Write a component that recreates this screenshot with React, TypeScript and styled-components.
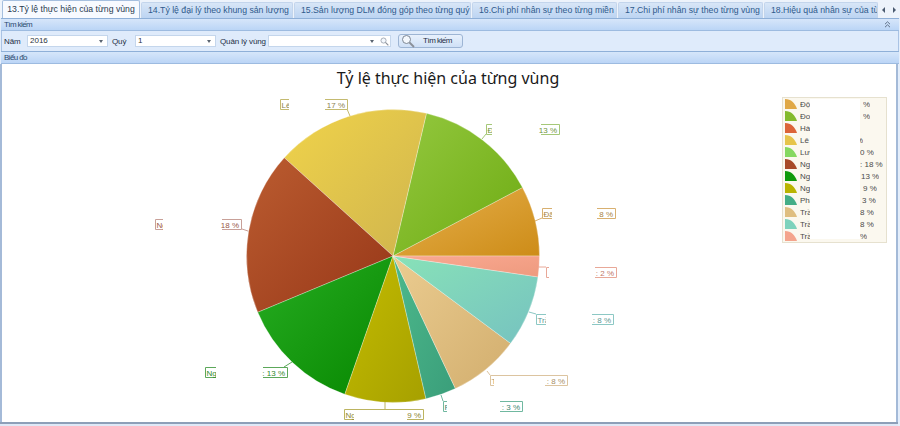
import styled, { createGlobalStyle } from 'styled-components';

const GlobalStyle = createGlobalStyle`
  html, body {
    margin: 0;
    padding: 0;
    background: #e4eefb;
  }
  #root {
    width: 900px;
    height: 426px;
    overflow: hidden;
  }
`;

const FONT = '"Liberation Sans", "Noto Sans", sans-serif';
const CX = 393;
const CY = 256;
const R = 146.5;

const tabs = [
  { title: '14.Tỷ lệ đại lý theo khung sản lượng', width: 152 },
  { title: '15.Sản lượng DLM đóng góp theo từng quý', width: 177 },
  { title: '16.Chi phí nhân sự theo từng miền', width: 145 },
  { title: '17.Chi phí nhân sự theo từng vùng', width: 145 },
  { title: '18.Hiệu quả nhân sự của từng vùng', width: 114 },
];

// from / to are degrees counter clockwise from 3 o'clock
const slices = [
  { from: 0, to: 27.9, light: '#e6b04c', dark: '#cd8c18' },
  { from: 27.9, to: 76.8, light: '#94c83f', dark: '#6dab12' },
  { from: 76.8, to: 137.9, light: '#f0d34a', dark: '#cfb44e' },
  { from: 137.9, to: 202.6, light: '#bb5c30', dark: '#973718' },
  { from: 202.6, to: 250.8, light: '#27ad22', dark: '#078700' },
  { from: 250.8, to: 283, light: '#c4bc00', dark: '#a6a000' },
  { from: 283, to: 295.2, light: '#4db98c', dark: '#3a9e7a' },
  { from: 295.2, to: 323.4, light: '#ebcc90', dark: '#d2ae6e' },
  { from: 323.4, to: 351.8, light: '#88e2b8', dark: '#76c2c0' },
  { from: 351.8, to: 360, light: '#faa992', dark: '#ee9a7e' },
];

const callouts = [
  { color: '#c4ba70', text: '#8c8450', name: 'Lê', value: '17 %', y: 99, lx: 280, lw: 9, rx: 325, rw: 23, line: '347,109 350,116' },
  { color: '#a5c878', text: '#6f9540', name: 'Đ', value: '13 %', y: 124, lx: 486, lw: 6, rx: 541, rw: 19, line: '486,134 482,139' },
  { color: '#d8b070', text: '#a88440', name: 'Đã', value: '8 %', y: 208, lx: 542, lw: 10, rx: 597, rw: 19, line: '542,218 535,221' },
  { color: '#e8a898', text: '#c07868', name: '', value: ': 2 %', y: 267, lx: 546, lw: 3, rx: 595, rw: 22, line: '539,267 546,267' },
  { color: '#8cc8c4', text: '#5c9894', name: 'Trầ', value: ': 8 %', y: 314, lx: 536, lw: 10, rx: 592, rw: 22, line: '529,312 536,314' },
  { color: '#dcc4a0', text: '#a89068', name: 'T', value: ': 8 %', y: 375, lx: 490, lw: 4, rx: 545, rw: 23, line: '487,371 490,375', joined: true },
  { color: '#70b8a0', text: '#408870', name: 'P', value: ': 3 %', y: 401, lx: 443, lw: 4, rx: 500, rw: 23, line: '441,395 443,401' },
  { color: '#bcb460', text: '#8c8630', name: 'Ng', value: '9 %', y: 409, lx: 344, lw: 10, rx: 407, rw: 17, line: '385,402 385,409', joined: true },
  { color: '#5ca85a', text: '#2f8a2c', name: 'Ng', value: ': 13 %', y: 367, lx: 205, lw: 11, rx: 263, rw: 25, line: '284,367 292,362' },
  { color: '#c8a098', text: '#985848', name: 'Ng', value: '18 %', y: 219, lx: 155, lw: 8, rx: 222, rw: 20, line: '242,229 248,231' },
];

const legend = [
  { color: '#e0a846', name: 'Đội', value: '%', indent: 3 },
  { color: '#84ba2c', name: 'Đoà', value: '%', indent: 3 },
  { color: '#dc6438', name: 'Hà', value: '', indent: 0 },
  { color: '#e6c44a', name: 'Lê T', value: '%', indent: 0, cut: true },
  { color: '#86d860', name: 'Lươ', value: '0 %', indent: 0 },
  { color: '#a84a28', name: 'Ngu', value: ': 18 %', indent: 0 },
  { color: '#109a0a', name: 'Ngu', value: '13 %', indent: 1 },
  { color: '#bab400', name: 'Ngu', value: '9 %', indent: 3 },
  { color: '#44ad86', name: 'Phá', value: '3 %', indent: 2 },
  { color: '#dfbe80', name: 'Trầ', value: '8 %', indent: 0 },
  { color: '#7ed2bc', name: 'Trầ', value: '8 %', indent: 0 },
  { color: '#f4a48c', name: 'Trầ', value: '%', indent: 0 },
];

const point = (deg: number) => {
  const rad = (deg * Math.PI) / 180;
  return `${(CX + R * Math.cos(rad)).toFixed(2)} ${(CY - R * Math.sin(rad)).toFixed(2)}`;
};

const slicePath = (from: number, to: number) =>
  `M${CX} ${CY} L${point(from)} A${R} ${R} 0 ${to - from > 180 ? 1 : 0} 0 ${point(to)} Z`;

const Magnifier = ({ size }: { size: number }) => (
  <svg width={size} height={size} viewBox="0 0 14 14" fill="none" stroke="#7d8794">
    <circle cx="5.5" cy="5.5" r="4" strokeWidth="1" fill="#f4f8fd" />
    <path d="M8.5 8.5 L13 13" strokeWidth="1.8" stroke="#8a8f98" />
  </svg>
);

const App = () => {
  return (
    <Page>
      <GlobalStyle />
      <TabBar>
        <ActiveTab>13.Tỷ lệ thực hiện của từng vùng</ActiveTab>
        {tabs.map((tab) => (
          <Tab key={tab.title} $width={tab.width}>
            {tab.title}
          </Tab>
        ))}
        <TabArrows>
          <Arrow $right={false} />
          <Arrow $right />
        </TabArrows>
      </TabBar>

      <PanelHeader>
        Tìm kiếm
        <Collapse>
          <svg width="7" height="7" viewBox="0 0 7 7" fill="none" stroke="#5f7187">
            <path d="M1 3.2 L3.5 0.8 L6 3.2 M1 6.2 L3.5 3.8 L6 6.2" />
          </svg>
        </Collapse>
      </PanelHeader>
      <SearchForm>
        <FieldLabel $width={23}>Năm</FieldLabel>
        <Field $width={81}>
          2016
          <Caret />
        </Field>
        <FieldLabel $width={23}>Quý</FieldLabel>
        <Field $width={81}>
          1
          <Caret />
        </Field>
        <FieldLabel $width={48}>Quản lý vùng</FieldLabel>
        <Field $width={123}>
          <Caret $shift={12} />
          <FieldIcon>
            <Magnifier size={9} />
          </FieldIcon>
        </Field>
        <SearchButton>
          <Magnifier size={14} />
          <span>Tìm kiếm</span>
        </SearchButton>
      </SearchForm>
      <PanelHeader>Biểu đồ</PanelHeader>

      <ChartArea>
        <ChartTitle>Tỷ lệ thực hiện của từng vùng</ChartTitle>
        <PieSvg viewBox="2 92 894 330" width="894" height="330">
          <defs>
            {slices.map((s, i) => (
              <linearGradient key={i} id={`slice-${i}`} x1="0" y1="0" x2="1" y2="1">
                <stop offset="0" stopColor={s.light} />
                <stop offset="1" stopColor={s.dark} />
              </linearGradient>
            ))}
          </defs>
          {slices.map((s, i) => (
            <path
              key={i}
              d={slicePath(s.from, s.to)}
              fill={`url(#slice-${i})`}
              stroke="#ffffff"
              strokeOpacity="0.4"
              strokeWidth="0.7"
            />
          ))}
          {callouts.map((c) => (
            <g key={c.value + c.lx}>
              <polyline points={c.line} fill="none" stroke={c.color} />
              <path
                d={`M${c.lx + c.lw} ${c.y + 0.5} H${c.lx + 0.5} V${c.y + 10.5} H${c.lx + c.lw}`}
                fill="#fff"
                stroke={c.color}
              />
              <path
                d={`M${c.rx} ${c.y + 0.5} H${c.rx + c.rw - 0.5} V${c.y + 10.5} H${c.rx}`}
                fill="#fff"
                stroke={c.color}
              />
              {c.joined && (
                <path d={`M${c.lx + c.lw} ${c.y + 0.5} H${c.rx}`} stroke={c.color} fill="none" />
              )}
              <svg x={c.lx + 1} y={c.y} width={c.lw - 1} height={11}>
                <CalloutText x={0.5} y={8.5} fill={c.text}>
                  {c.name}
                </CalloutText>
              </svg>
              <CalloutText x={c.rx + c.rw - 3} y={c.y + 8.5} fill={c.text} textAnchor="end">
                {c.value}
              </CalloutText>
            </g>
          ))}
        </PieSvg>

        <Legend>
          <LegendMask />
          {legend.map((item, i) => (
            <LegendRow key={i}>
              <svg width="12" height="10" viewBox="0 0 12 10">
                <path d="M0 0 C6 0 10 4 12 10 H0 Z" fill={item.color} />
              </svg>
              <LegendName>{item.name}</LegendName>
              <LegendValue $indent={item.indent} $cut={item.cut}>
                {item.value}
              </LegendValue>
            </LegendRow>
          ))}
        </Legend>
      </ChartArea>
      <BottomEdge />
    </Page>
  );
};

const Page = styled.div`
  width: 900px;
  height: 426px;
  display: flex;
  flex-direction: column;
  background: #e4eefb;
  font-family: ${FONT};
  color: #1e2f46;
  overflow: hidden;
`;

const TabBar = styled.div`
  height: 18px;
  flex: none;
  display: flex;
  align-items: flex-end;
  gap: 1px;
  padding-left: 2px;
  background: #edf3fb;
  box-sizing: border-box;
`;

const ActiveTab = styled.div`
  width: 138px;
  height: 18px;
  flex: none;
  box-sizing: border-box;
  border: 1px solid #a5bfdf;
  border-bottom: none;
  border-radius: 2px 2px 0 0;
  background: #f7faff;
  font-size: 8.7px;
  line-height: 17px;
  text-align: center;
  color: #2a3a50;
  white-space: nowrap;
`;

const Tab = styled.div<{ $width: number }>`
  width: ${(p) => p.$width}px;
  height: 16px;
  flex: none;
  box-sizing: border-box;
  border: 1px solid #c3d5ec;
  border-bottom: none;
  border-radius: 2px 2px 0 0;
  background: linear-gradient(#d8e6f7, #bcd4f2);
  font-size: 8.7px;
  line-height: 15px;
  padding-left: 6px;
  color: #2f5a8c;
  white-space: nowrap;
  overflow: hidden;
`;

const TabArrows = styled.div`
  flex: 1;
  display: flex;
  justify-content: space-between;
  align-items: center;
  padding: 0 4px 0 3px;
  height: 16px;
`;

const Arrow = styled.span<{ $right: boolean }>`
  width: 0;
  height: 0;
  border-top: 3px solid transparent;
  border-bottom: 3px solid transparent;
  border-left: ${(p) => (p.$right ? '3px solid #4a5a70' : 'none')};
  border-right: ${(p) => (p.$right ? 'none' : '3px solid #4a5a70')};
`;

const PanelHeader = styled.div`
  height: 13px;
  flex: none;
  box-sizing: border-box;
  display: flex;
  align-items: center;
  justify-content: space-between;
  margin: 0 1px;
  padding: 0 8px 0 3px;
  background: linear-gradient(#d6e6fa, #bbd5f6);
  border-top: 1px solid #8fb0d8;
  border-bottom: 1px solid #9dbbe0;
  font-size: 8px;
  letter-spacing: -0.6px;
  color: #2a4a70;
`;

const Collapse = styled.span`
  display: flex;
`;

const SearchForm = styled.div`
  height: 20px;
  flex: none;
  display: flex;
  align-items: center;
  padding-left: 2px;
  background: #dfebfb;
  box-sizing: border-box;
  margin: 0 1px;
  border-left: 1px solid #aac3e4;
  border-right: 1px solid #aac3e4;
`;

const FieldLabel = styled.label<{ $width: number }>`
  width: ${(p) => p.$width}px;
  flex: none;
  font-size: 8px;
  white-space: nowrap;
  letter-spacing: -0.1px;
`;

const Field = styled.div<{ $width: number }>`
  width: ${(p) => p.$width}px;
  height: 12px;
  flex: none;
  box-sizing: border-box;
  position: relative;
  margin-right: 4px;
  padding-left: 2px;
  background: #fff;
  border: 1px solid #c4d6ec;
  font-size: 8px;
  line-height: 10px;
  color: #2a3440;
`;

const Caret = styled.span<{ $shift?: number }>`
  position: absolute;
  right: ${(p) => 4 + (p.$shift || 0)}px;
  top: 4px;
  width: 0;
  height: 0;
  border-left: 2px solid transparent;
  border-right: 2px solid transparent;
  border-top: 3px solid #5a6470;
`;

const FieldIcon = styled.span`
  position: absolute;
  right: 1px;
  top: 1px;
  display: flex;
`;

const SearchButton = styled.button`
  width: 65px;
  height: 14px;
  flex: none;
  margin: 0 0 1px 3px;
  padding: 0 2px;
  display: flex;
  align-items: center;
  box-sizing: border-box;
  border: 1px solid #9db5d4;
  border-radius: 3px;
  background: linear-gradient(#e8f1fc, #cfe0f6);
  font-family: ${FONT};
  font-size: 8px;
  letter-spacing: -0.5px;
  color: #1e2f46;

  span {
    flex: 1;
    text-align: center;
  }
`;

const ChartArea = styled.div`
  flex: 1;
  position: relative;
  min-height: 0;
  box-sizing: border-box;
  background: #fff;
  border-left: 2px solid #a4bad8;
  border-right: 2px solid #a4bad8;
  width: 898px;
`;

const ChartTitle = styled.div`
  height: 28px;
  font-family: "Noto Sans", sans-serif;
  font-size: 16px;
  line-height: 29px;
  text-align: center;
  color: #1a1a1a;
  padding-right: 2px;
`;

const PieSvg = styled.svg`
  display: block;
`;

const CalloutText = styled.text`
  font-family: ${FONT};
  font-size: 8px;
`;

const Legend = styled.div`
  position: absolute;
  left: 780px;
  top: 33px;
  width: 105px;
  height: 146px;
  box-sizing: border-box;
  padding: 0 0 0 2px;
  display: flex;
  flex-direction: column;
  background: #fbf8ef;
  border: 1px solid #e6e1cf;
`;

const LegendMask = styled.div`
  position: absolute;
  left: 27px;
  top: 1px;
  width: 50px;
  bottom: 3px;
  background: #fff;
`;

const LegendRow = styled.div`
  height: 12px;
  flex: none;
  position: relative;
  display: flex;
  align-items: center;
  font-size: 8px;
  color: #4a4a4a;
`;

const LegendName = styled.span`
  width: 10px;
  margin-left: 3px;
  overflow: hidden;
  white-space: nowrap;
`;

const LegendValue = styled.span<{ $indent: number; $cut?: boolean }>`
  margin-left: ${(p) => 50 + p.$indent}px;
  width: ${(p) => (p.$cut ? '3px' : 'auto')};
  overflow: hidden;
  white-space: nowrap;
  direction: ${(p) => (p.$cut ? 'rtl' : 'ltr')};
`;

const BottomEdge = styled.div`
  height: 4px;
  flex: none;
  box-sizing: border-box;
  margin-right: 2px;
  border-top: 2px solid #8d9fb8;
  background: #dfe9f7;
`;

export default App;
